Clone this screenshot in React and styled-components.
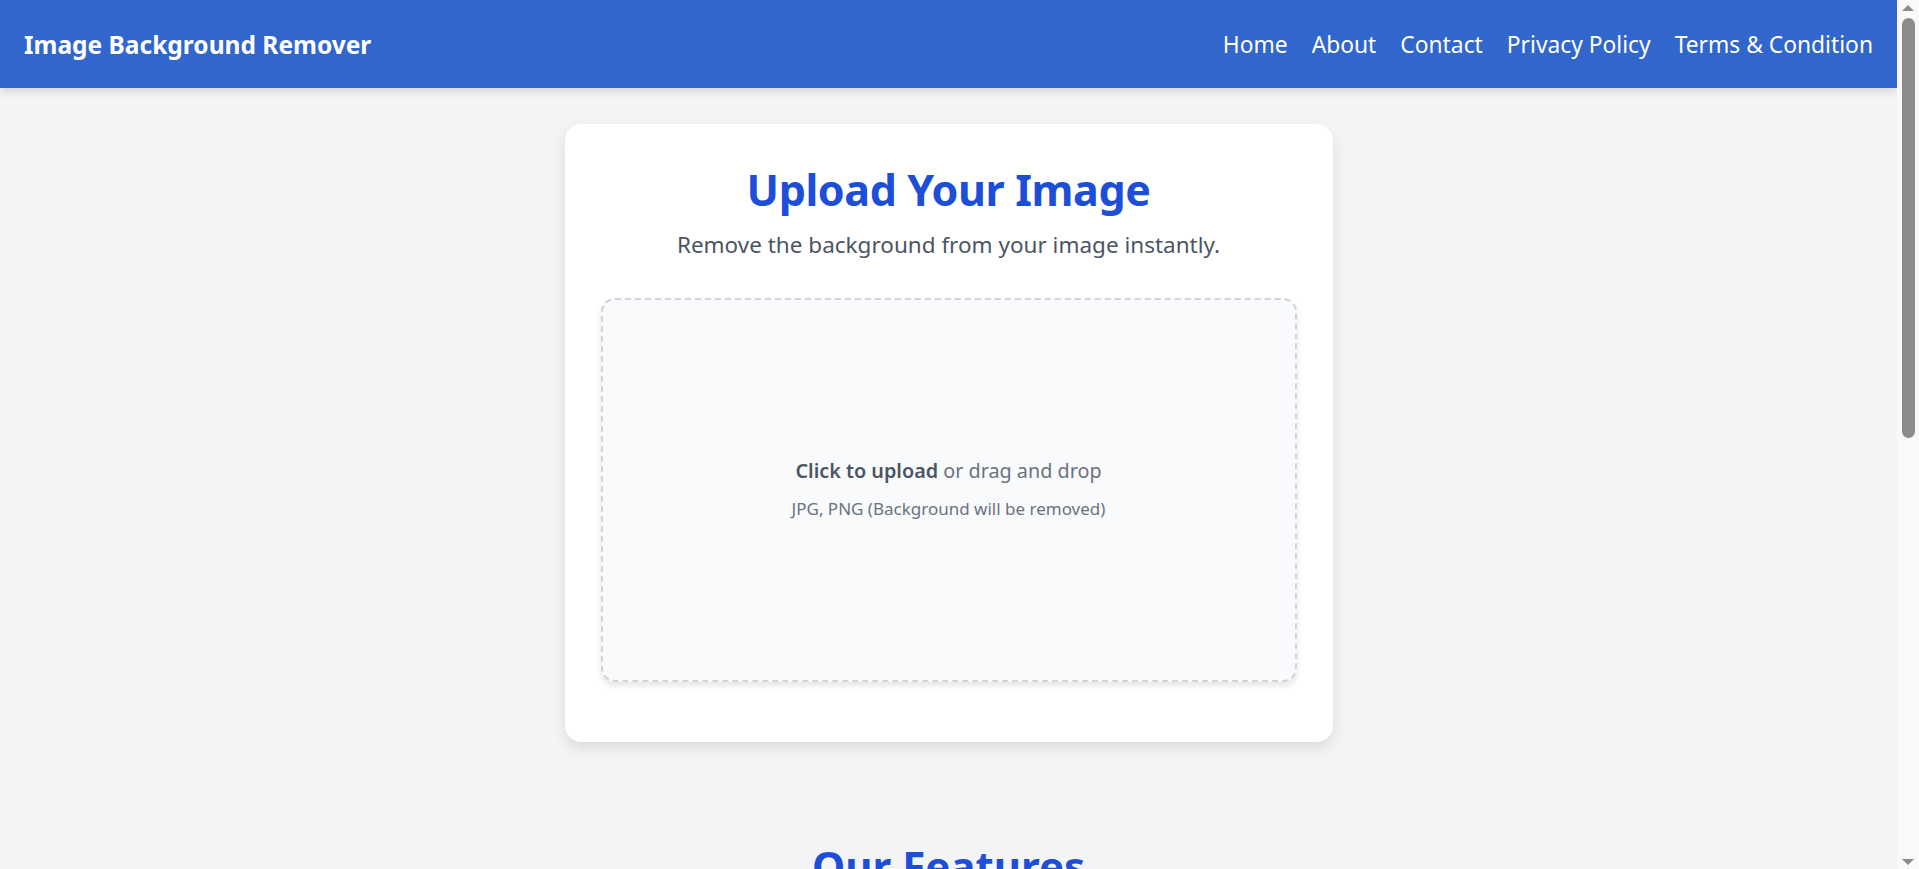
import React from 'react';
import styled, { createGlobalStyle } from 'styled-components';

const GlobalStyle = createGlobalStyle`
  html, body {
    margin: 0;
    padding: 0;
    background: #f3f4f6;
    font-family: "Noto Sans", "Open Sans", sans-serif;
  }
  * { box-sizing: border-box; }
`;

const Shell = styled.div`
  display: flex;
  height: 100vh;
  overflow: hidden;
`;
const Page = styled.div`
  flex: 1;
  min-width: 0;
  overflow: hidden;
`;

// the window's scroll bar, as it shows in the capture
const ScrollTrack = styled.div`
  width: 22px;
  flex-shrink: 0;
  background: #f9f9f9;
  display: flex;
  flex-direction: column;
  align-items: center;
  padding: 5px 0 4px;
`;
const Arrow = styled.span`
  width: 0;
  height: 0;
  border-left: 6px solid transparent;
  border-right: 6px solid transparent;
  ${p => (p.down ? 'border-top: 6px solid #8b8b8b;' : 'border-bottom: 6px solid #8b8b8b;')}
  ${p => p.down && 'margin-top: auto;'}
`;
const Thumb = styled.span`
  width: 13px;
  height: 420px;
  margin-top: 7px;
  border-radius: 7px;
  background: #8b8b8b;
`;

const Header = styled.header`
  height: 88px;
  padding: 0 24px;
  display: flex;
  align-items: center;
  justify-content: space-between;
  background: #3166cc;
  box-shadow: 0 4px 8px rgba(0, 0, 0, 0.12);
  position: relative;
`;
const Brand = styled.a`
  color: #fff;
  font-size: 24.5px;
  font-weight: 700;
  text-decoration: none;
`;
const Nav = styled.nav`
  display: flex;
  gap: 24px;
`;
const NavLink = styled.a`
  color: #fff;
  font-size: 22.8px;
  text-decoration: none;
`;

const Main = styled.main`
  padding: 36px 24px 0;
  display: flex;
  flex-direction: column;
  align-items: center;
`;
const Card = styled.section`
  width: 768px;
  padding: 36px 36px 60px;
  background: #fff;
  border-radius: 16px;
  box-shadow: 0 6px 14px rgba(0, 0, 0, 0.1);
  text-align: center;
`;
const Title = styled.h1`
  margin: 0;
  color: #1d4ed8;
  font-size: 43px;
  letter-spacing: -0.4px;
  line-height: 60px;
  font-weight: 700;
`;
const Subtitle = styled.p`
  margin: 10px 0 38px;
  color: #4b5563;
  font-size: 22.5px;
  line-height: 30px;
`;
const DropZone = styled.label`
  height: 384px;
  padding-bottom: 3px;
  display: flex;
  flex-direction: column;
  align-items: center;
  justify-content: center;
  gap: 12px;
  background: #f9fafb;
  border: 2px dashed #d1d5db;
  border-radius: 14px;
  box-shadow: 0 4px 6px rgba(0, 0, 0, 0.1);
  cursor: pointer;
`;
const DropText = styled.p`
  margin: 0;
  color: #6b7280;
  font-size: ${p => (p.small ? '17px' : '19.8px')};
  line-height: ${p => (p.small ? '24px' : '28px')};
  strong { font-weight: 600; color: #4b5563; }
`;

const Features = styled.section`
  padding: 95px 24px 600px;
  text-align: center;
`;
const SectionTitle = styled.h2`
  margin: 0;
  color: #1d4ed8;
  font-size: 42px;
  font-weight: 700;
`;

const links = ['Home', 'About', 'Contact', 'Privacy Policy', 'Terms & Condition'];

export default function App() {
  return (
    <>
      <GlobalStyle />
      <Shell>
        <Page>
          <Header>
            <Brand href="#">Image Background Remover</Brand>
            <Nav>
              {links.map(l => (
                <NavLink key={l} href="#">{l}</NavLink>
              ))}
            </Nav>
          </Header>
          <Main>
            <Card>
              <Title>Upload Your Image</Title>
              <Subtitle>Remove the background from your image instantly.</Subtitle>
              <DropZone>
                <DropText><strong>Click to upload</strong> or drag and drop</DropText>
                <DropText small>JPG, PNG (Background will be removed)</DropText>
              </DropZone>
            </Card>
          </Main>
          <Features>
            <SectionTitle>Our Features</SectionTitle>
          </Features>
        </Page>
        <ScrollTrack>
          <Arrow />
          <Thumb />
          <Arrow down />
        </ScrollTrack>
      </Shell>
    </>
  );
}
